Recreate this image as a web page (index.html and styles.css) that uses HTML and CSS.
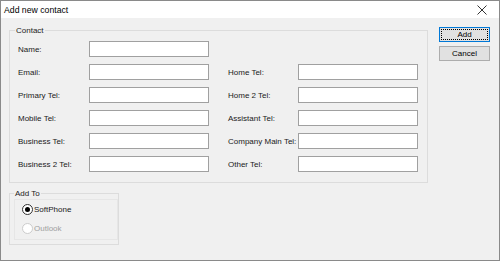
FILE: index.html
```html
<!DOCTYPE html>
<html lang="en">
<head>
    <meta charset="UTF-8">
    <title>Add new contact</title>
    <link rel="stylesheet" href="styles.css">
</head>
<body>
  <div class="window">
      <div class="titlebar">
          <span class="title">Add new contact</span>
          <svg class="close" width="10" height="10" viewBox="0 0 10 10"><path d="M0.5 0.5L9.5 9.5M9.5 0.5L0.5 9.5" stroke="#333" stroke-width="1"/></svg>
      </div>
      <div class="content">
          <div class="main">
              <fieldset class="group contact">
                  <legend>Contact</legend>
                  <div class="grid">
                      <label>Name:</label><input type="text"><span></span><span></span>
                      <label>Email:</label><input type="text"><label>Home Tel:</label><input type="text">
                      <label>Primary Tel:</label><input type="text"><label>Home 2 Tel:</label><input type="text">
                      <label>Mobile Tel:</label><input type="text"><label>Assistant Tel:</label><input type="text">
                      <label>Business Tel:</label><input type="text"><label>Company Main Tel:</label><input type="text">
                      <label>Business 2 Tel:</label><input type="text"><label>Other Tel:</label><input type="text">
                  </div>
              </fieldset>
              <fieldset class="group addto">
                  <legend>Add To</legend>
                  <div class="inner">
                      <div class="radio"><span class="dot checked"></span>SoftPhone</div>
                      <div class="radio disabled"><span class="dot"></span>Outlook</div>
                  </div>
              </fieldset>
          </div>
          <div class="buttons">
              <button class="btn default">Add</button>
              <button class="btn">Cancel</button>
          </div>
      </div>
  </div>
</body>
</html>
```

FILE: styles.css
```css
body { margin: 0; font-family: "Liberation Sans", Arial, sans-serif; font-size: 8px; color: #1a1a1a; }
.window { width: 500px; height: 261px; box-sizing: border-box; border: 1px solid #8a8a8a; background-color: #f0f0f0; display: flex; flex-direction: column; }
.titlebar { height: 17px; background-color: #fff; display: flex; align-items: center; justify-content: space-between; padding: 0 12px 0 3px; flex-shrink: 0; }
.title { font-size: 8.7px; color: #000; }
.content { display: flex; padding: 7px 0 0 8px; gap: 11px; }
.main { display: flex; flex-direction: column; gap: 5px; }
.group { margin: 0; border: 1px solid #dcdcdc; padding: 0; }
.group legend { padding: 0 1px; font-size: 8px; line-height: 11px; }
.contact { width: 419px; height: 158px; box-sizing: border-box; padding: 5px 8px 0 8px; }
.contact legend { margin-left: -3px; }
.grid { display: grid; grid-template-columns: 71px 120px 89px 120px; row-gap: 7px; }
.grid label { display: flex; align-items: center; height: 16px; white-space: nowrap; }
.grid label:nth-child(4n+3) { padding-left: 19px; }
.grid input { width: 120px; height: 16px; box-sizing: border-box; margin: 0; border: 1px solid #a0a0a0; background-color: #fff; padding: 0; }
.addto { width: 110px; height: 57px; box-sizing: border-box; padding: 0 0 0 4px; }
.addto legend { margin-left: 0; }
.inner { border: 1px solid #e6e6e6; height: 41px; display: flex; flex-direction: column; gap: 8px; padding: 4px 0 0 7px; box-sizing: border-box; }
.radio { display: flex; align-items: center; gap: 0; height: 11px; }
.radio.disabled { color: #a0a0a0; }
.dot { width: 9px; height: 9px; border-radius: 50%; border: 1px solid #333; background-color: #fff; position: relative; margin-right: 1px; }
.dot.checked::after { content: ""; position: absolute; left: 2px; top: 2px; width: 5px; height: 5px; border-radius: 50%; background-color: #000; }
.disabled .dot { border-color: #cccccc; }
.buttons { display: flex; flex-direction: column; gap: 4px; padding-top: 2px; }
.btn { width: 51px; height: 15px; box-sizing: border-box; margin: 0; padding: 0; border: 1px solid #adadad; background-color: #e1e1e1; font-family: "Liberation Sans", Arial, sans-serif; font-size: 8px; color: #000; }
.btn.default { border: 1px solid #0078d7; outline: 1px dotted #000; outline-offset: -3px; }
```
